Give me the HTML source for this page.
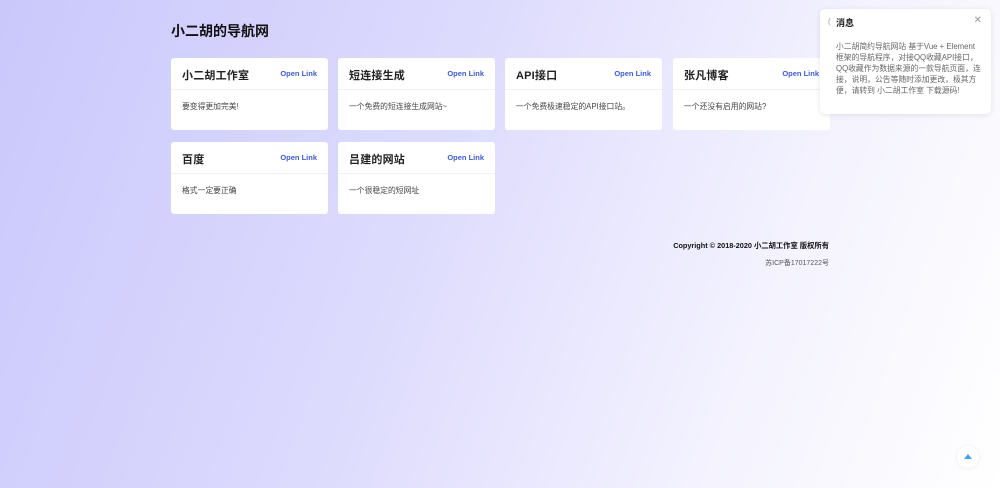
<!DOCTYPE html>
<html><head><meta charset="utf-8"><style>
*{margin:0;padding:0;box-sizing:border-box}
body{width:1000px;height:488px;overflow:hidden;font-family:"Liberation Sans","Noto Sans CJK SC",sans-serif;background:linear-gradient(110deg,#cac8fb 0%,#dcdafd 40%,#f4f3fe 75%,#fff 100%);position:relative}
h1{position:absolute;left:171px;top:21px;font-size:14px;font-weight:bold;color:#111}
.card{position:absolute;width:157px;height:72px;background:#fff;border-radius:3px}
.hd{height:32px;border-bottom:1px solid #f0f0f5;position:relative}
.t{position:absolute;left:11px;top:9px;font-size:11px;font-weight:bold;color:#222;letter-spacing:.2px}
.l{position:absolute;right:11px;top:11px;font-size:7.5px;color:#3b5bdb;font-weight:bold}
.b{padding:11px 11px;font-size:7.8px;color:#444}
.n{position:absolute;left:820px;top:9px;width:171px;height:105px;background:#fff;border-radius:5px;box-shadow:0 1px 6px rgba(0,0,0,.1)}
.n .ic{position:absolute;left:8px;top:8px;font-size:8px;color:#999}
.n .nt{position:absolute;left:16px;top:7px;font-size:9px;font-weight:bold;color:#222}
.n .x{position:absolute;right:9px;top:6px;font-size:10px;color:#999}
.n .nb{position:absolute;left:16px;top:32px;width:148px;font-size:7.8px;line-height:11px;color:#666}
.f1{position:absolute;right:171px;top:241px;font-size:7.3px;font-weight:bold;color:#111}
.f2{position:absolute;right:171px;top:258px;font-size:7px;color:#555}
.top{position:absolute;left:957px;top:446px;width:22px;height:22px;border-radius:50%;background:#fff;box-shadow:0 0 4px rgba(0,0,0,.08)}
.top:after{content:"";position:absolute;left:7px;top:8px;border-left:4px solid transparent;border-right:4px solid transparent;border-bottom:5px solid #409eff}
</style></head><body>
<h1>小二胡的导航网</h1>
<div class="card" style="left:171px;top:58px"><div class="hd"><span class="t">小二胡工作室</span><span class="l">Open Link</span></div><div class="b">要变得更加完美!</div></div>
<div class="card" style="left:338px;top:58px"><div class="hd"><span class="t">短连接生成</span><span class="l">Open Link</span></div><div class="b">一个免费的短连接生成网站~</div></div>
<div class="card" style="left:505px;top:58px"><div class="hd"><span class="t">API接口</span><span class="l">Open Link</span></div><div class="b">一个免费极速稳定的API接口站。</div></div>
<div class="card" style="left:673px;top:58px"><div class="hd"><span class="t">张凡博客</span><span class="l">Open Link</span></div><div class="b">一个还没有启用的网站?</div></div>
<div class="card" style="left:171px;top:142px"><div class="hd"><span class="t">百度</span><span class="l">Open Link</span></div><div class="b">格式一定要正确</div></div>
<div class="card" style="left:338px;top:142px"><div class="hd"><span class="t">吕建的网站</span><span class="l">Open Link</span></div><div class="b">一个很稳定的短网址</div></div>
<div class="f1">Copyright © 2018-2020 小二胡工作室 版权所有</div>
<div class="f2">苏ICP备17017222号</div>
<div class="n"><span class="ic">(</span><span class="nt">消息</span><span class="x">✕</span><div class="nb">小二胡简约导航网站 基于Vue + Element 框架的导航程序，对接QQ收藏API接口，QQ收藏作为数据来源的一款导航页面，连接，说明，公告等随时添加更改，极其方便，请转到 小二胡工作室 下载源码!</div></div>
<div class="top"></div>
</body></html>
